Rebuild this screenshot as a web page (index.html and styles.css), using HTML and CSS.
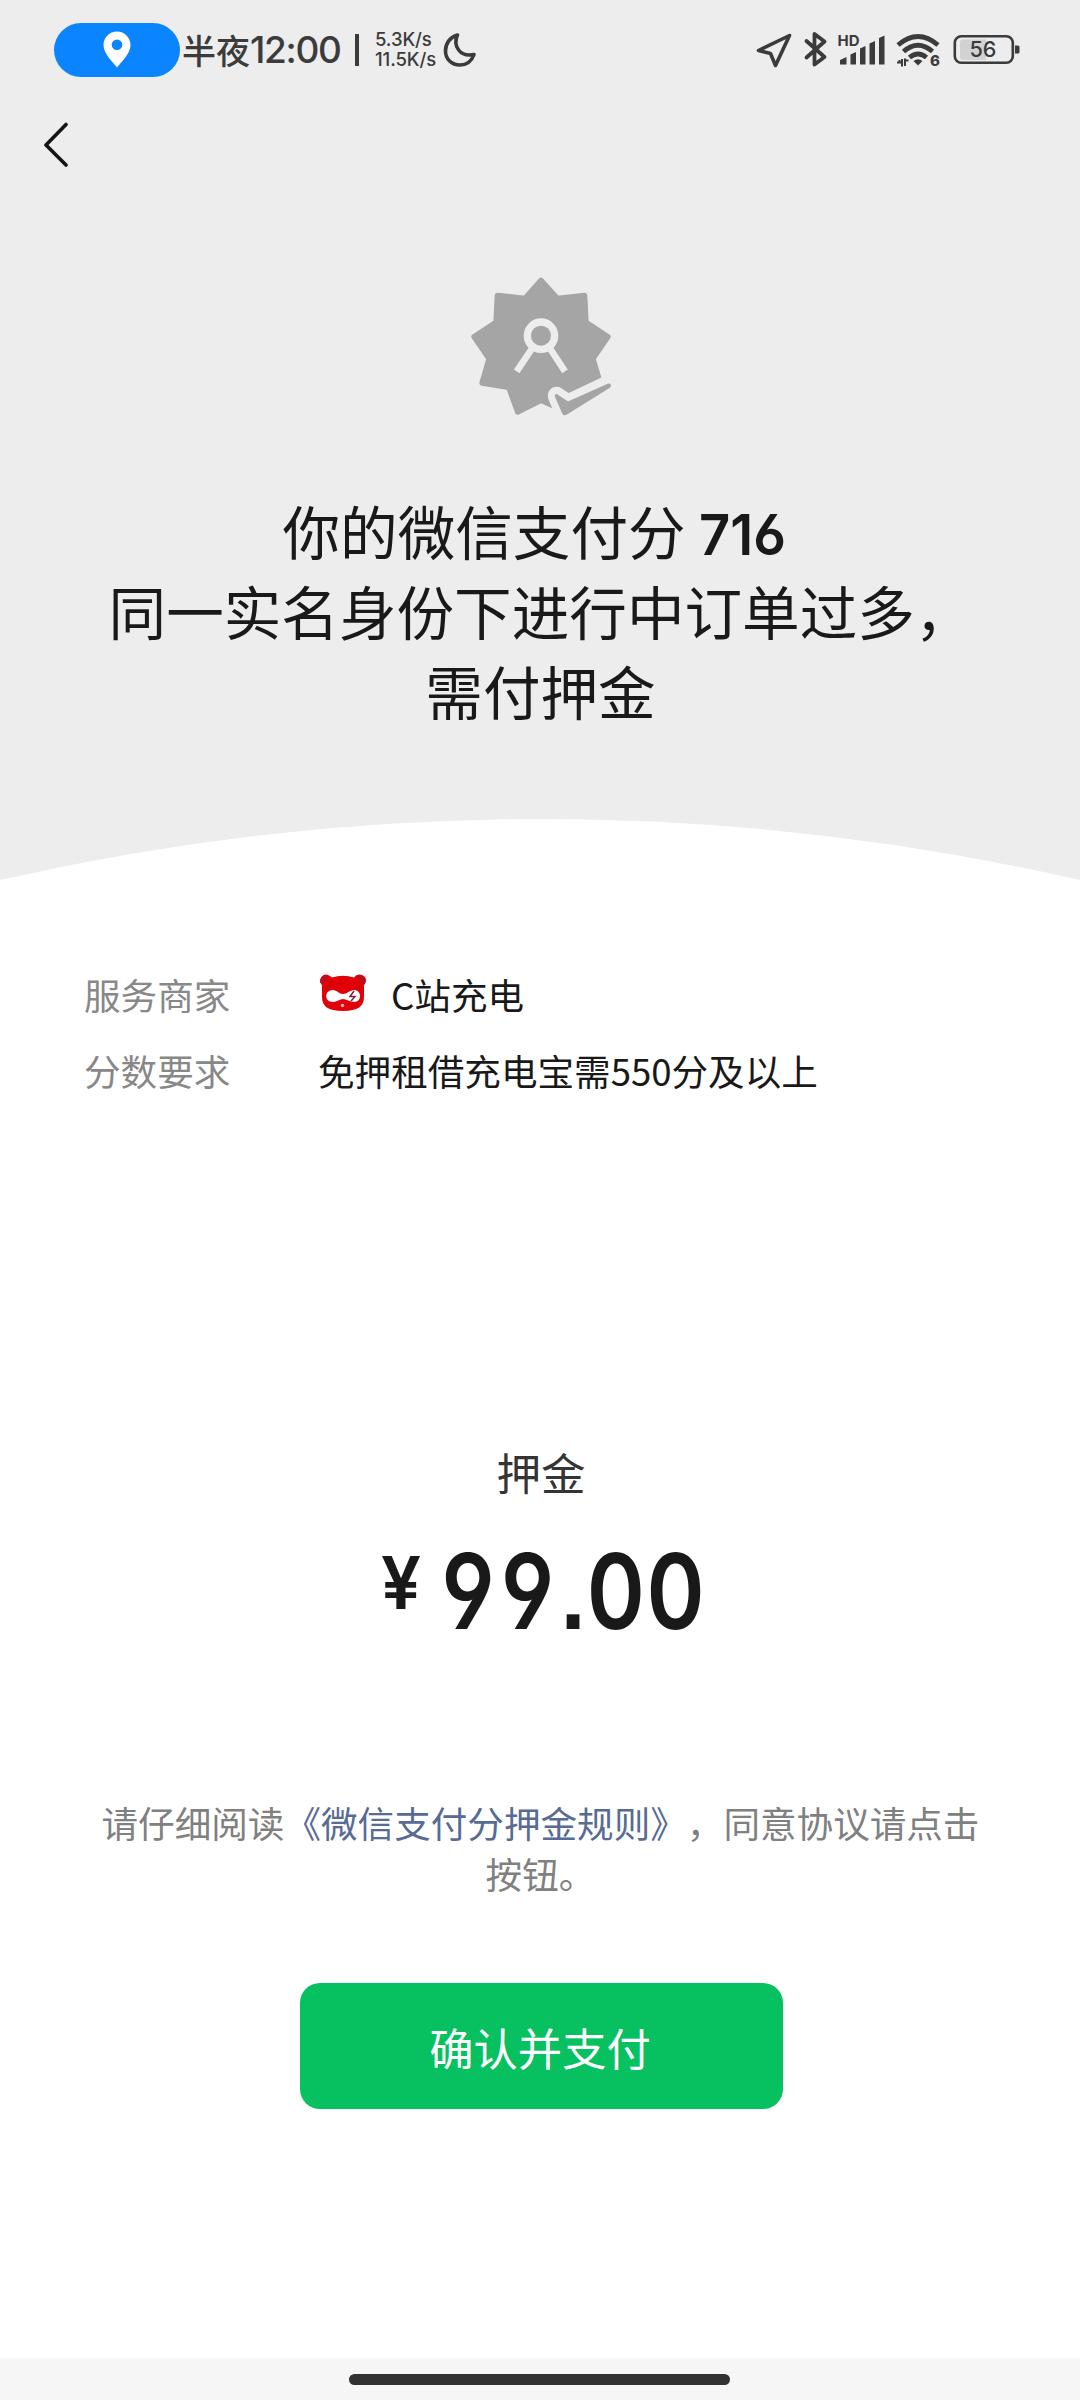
FILE: index.html
```html
<!DOCTYPE html>
<html lang="zh-CN">
<head>
<meta charset="utf-8">
<title>微信支付分</title>
<link rel="stylesheet" href="styles.css">
</head>
<body>
<main class="page">
  <section class="hero">
    <header class="status">
      <div class="pill">
        <svg width="28" height="37" viewBox="0 0 28 37"><path fill="#fff" fill-rule="evenodd" d="M14 .5C6.500.5.5 6.500.5 13.800c0 7.500 6 14 13.500 22.700 7.500-8.700 13.500-15.200 13.500-22.700C27.500 6.500 21.500.5 14 .5ZM14 8.500a5.300 5.300 0 1 1 0 10.600 5.300 5.300 0 0 1 0-10.600Z"/></svg>
      </div>
      <div class="clock">半夜<span class="digits">12:00</span></div>
      <div class="divider"></div>
      <div class="speed"><span>5.3K/s</span><span>11.5K/s</span></div>
      <svg class="moon" width="36" height="36" viewBox="0 0 36 36"><path fill="none" stroke="#3b3b3b" stroke-width="3.600" stroke-linejoin="round" d="M15.500 3C10.500 14 18 25.500 32 22.500C29.500 29.500 24.500 33 18 33C9.500 33 3.500 27 3.500 19C3.500 11.500 8 5 15.500 3Z"/></svg>
      <svg class="icons" width="270" height="40" viewBox="755 30 270 40" fill="none" stroke="#3b3b3b">
        <path stroke-width="3.600" stroke-linejoin="round" d="M789.500 35.500 758.500 50.500 770.500 53.500 775.500 65.500Z"/>
        <path stroke-width="3.800" stroke-linejoin="round" stroke-linecap="round" d="M806.500 41 824.500 57 814.500 64.500V34L824.500 41.500 806.500 57.500"/>
        <text class="hd" x="837.500" y="46" textLength="22" lengthAdjust="spacingAndGlyphs">HD</text>
        <path fill="#3b3b3b" stroke="none" d="M840 60l6.500-3v7.500H840ZM850.500 54.500l5.500-2.500v12.500h-5.500ZM860 48.500l5.500-2.500v18.500H860ZM869.500 43.500l5.500-2.500v23.500h-5.500ZM879 38l5.500-2.500v29H879Z"/>
        <path stroke-width="4.800" d="M898 45q20-17 40 0M903.500 51.500q14.500-12.500 29 0M909.500 57.500q8.500-7 17 0"/>
        <path fill="#3b3b3b" stroke="none" d="M913.500 61q4.500-3.500 9 0L918 65.500Z"/>
        <path stroke-width="2" d="M902 66.500v-7.500M897 62.500h4.500M905 58.500V66M905.500 60.500h3M899.500 60v3"/>
        <text class="six" x="930" y="66">6</text>
        <path fill="#d2d2d2" stroke="none" d="M963 39.500h23V60h-23q-3 0-3-3V42.500q0-3 3-3Z"/>
        <rect x="954.800" y="36.300" width="58" height="26.400" rx="6.500" stroke-width="2.600"/>
        <path fill="#3b3b3b" stroke="none" d="M1015 45.500h3q1.500 0 1.500 1.500v5q0 1.500-1.500 1.500h-3Z"/>
        <text class="level" x="969.500" y="57" textLength="27" lengthAdjust="spacingAndGlyphs">56</text>
      </svg>
    </header>
    <nav class="nav">
      <svg width="26" height="46" viewBox="0 0 26 46"><path fill="none" stroke="#151515" stroke-width="3.600" stroke-linecap="round" stroke-linejoin="round" d="M23 2.500 3 23 23 43"/></svg>
    </nav>
    <svg class="badge" width="148" height="144" viewBox="84 75 444 432">
      <path fill="#a5a5a5" stroke="#a5a5a5" stroke-width="16" stroke-linejoin="round" d="M303 91 352 145 434 136 438 217 504 260 459 326 478 390 400 440 336 466 303 451 233 486 206 412 126 399 147 326 102 260 168 217 172 136 255 145Z"/>
      <path fill="#ededed" d="M345 496 325 446C317 418 346 402 364 415L386 429 494 378 535 372V510H350Z"/>
      <path fill="#a5a5a5" stroke="#a5a5a5" stroke-width="10" stroke-linejoin="round" d="M349 437 384 460 505 406Q510 405 507 409L377 490Q373 492 371 488Z"/>
      <g fill="none" stroke="#ededed"><circle cx="303" cy="257" r="41" stroke-width="22"/><path stroke-width="20" d="M277 294 230 364M329 294 375 364"/></g>
    </svg>
    <h1 class="title">你的微信支付分 <svg class="score" width="100" height="64"><text x="0" y="54" textLength="87" lengthAdjust="spacingAndGlyphs">716</text></svg><br>同一实名身份下进行中订单过多，<br>需付押金</h1>
    <svg class="curve" width="1080" height="62" viewBox="0 0 1080 62"><path fill="#fff" d="M0 62A2421 2421 0 0 1 1080 62Z"/></svg>
  </section>

  <dl class="info">
    <dt>服务商家</dt>
    <dd class="merchant">
      <svg width="48" height="40" viewBox="0 0 48 40">
        <path fill="#df0008" d="M1 9C1 3 6 0 10 2.500Q12 3.500 13 4.500Q24 1 35 4.500Q38 0 43 2C48 4 48 9 45 12V24C45 33 39 38 24 38S3 33 3 24V12Z"/>
        <path fill="#b9101c" d="M1 9Q2 2 7 2L10 5 3 12ZM46 9Q46 2 40 2L38 5 45 12Z"/>
        <path fill="#fff" d="M14 17C18 17 20 21 24 21S31 17 35 17C43 17 43 29 35 29C31 29 27 26 24 26S18 29 14 29C5 29 5 17 14 17Z"/>
        <path fill="none" stroke="#802039" stroke-width="1.500" d="M35 18 31 23.500H36L32 28"/><circle cx="23.500" cy="32.500" r="1.800" fill="#ffaba8"/>
      </svg>
      <span>C站充电</span>
    </dd>
    <dt>分数要求</dt>
    <dd>免押租借充电宝需550分及以上</dd>
  </dl>

  <section class="deposit">
    <h2 class="label">押金</h2>
    <svg class="amount" width="350" height="140" viewBox="365 1520 350 140">
      <text class="yen" x="381" y="1607.500" textLength="40" lengthAdjust="spacingAndGlyphs">¥</text>
      <text class="value" transform="scale(.84 1)" x="525.500 596.500 665.500 698.500 769.500" y="1628">99.00</text>
    </svg>
  </section>

  <p class="terms">请仔细阅读<a class="link">《微信支付分押金规则》</a>，同意协议请点击<br>按钮。</p>
  <button class="pay" type="button">确认并支付</button>
  <footer class="home"><div class="handle"></div></footer>
</main>
</body>
</html>
```
FILE: styles.css
```css
* { box-sizing: border-box; margin: 0; padding: 0; }
body {
  background: #fff;
  color: #191919;
  font-family: "Noto Sans CJK SC", sans-serif;
}
.page {
  display: flex;
  flex-direction: column;
  align-items: center;
  width: 1080px;
  height: 2400px;
  overflow: hidden;
}
.hero {
  display: flex;
  flex-direction: column;
  align-items: center;
  width: 100%;
  height: 880px;
  background: #ededed;
}
.status {
  display: flex;
  align-items: center;
  width: 100%;
  height: 99px;
  padding-left: 54px;
  color: #3b3b3b;
}
.pill {
  display: flex;
  align-items: center;
  justify-content: center;
  width: 126px;
  height: 54px;
  border-radius: 27px;
  background: #0b84ff;
}
.clock {
  display: flex;
  align-items: center;
  width: 173px;
  height: 54px;
  padding-left: 2px;
  font-size: 34px;
  font-weight: 500;
  line-height: 50px;
  white-space: nowrap;
}
.digits { font-family: Inter, sans-serif; font-size: 37px; letter-spacing: -1.300px; }
.divider { width: 4px; height: 32px; margin-left: 2px; background: #3b3b3b; }
.speed {
  display: flex;
  flex-direction: column;
  width: 66px;
  margin-left: 16px;
  font-family: Inter, sans-serif;
  font-size: 18.500px;
  font-weight: 500;
  line-height: 19.500px;
  letter-spacing: -0.1px;
}
.moon { margin-left: 1px; }
.icons { margin-left: 277px; }
.hd, .six, .level { fill: #3b3b3b; stroke: none; font-family: Inter, sans-serif; }
.hd { font-size: 14.500px; font-weight: 700; }
.six { font-size: 15px; font-weight: 800; }
.level { font-size: 22px; font-weight: 500; }
.nav { width: 100%; height: 176px; padding: 23px 0 0 43px; }
.nav svg, .badge, .curve, .amount { display: block; }
.badge { margin-left: 4px; }
.title {
  height: 240px;
  margin-top: 71px;
  padding-left: 1px;
  font-size: 57.600px;
  font-weight: 400;
  line-height: 80px;
  text-align: center;
  white-space: nowrap;
}
.score, .amount {
  fill: #191919;
  font-family: Inter, sans-serif;
  font-feature-settings: "cv03", "cv04", "ss07";
}
.score { margin: -10px 0; font-size: 57px; font-weight: 600; line-height: 60px; overflow: visible; }
.curve { margin-top: auto; }
.info {
  display: grid;
  grid-template-columns: 234px 1fr;
  grid-auto-rows: 75.500px;
  align-items: center;
  width: 100%;
  margin-top: 77px;
  padding-left: 84px;
  font-size: 36.600px;
}
.info dt { color: #888; }
.merchant { display: flex; align-items: center; gap: 24px; padding-left: 1px; }
.merchant svg { margin-top: -3px; }
.deposit { display: flex; flex-direction: column; align-items: center; margin-top: 331px; }
.label { font-size: 44.500px; line-height: 66px; font-weight: 400; color: #353535; padding-left: 2px; }
.amount { margin-top: 16px; }
.yen { font-size: 73px; font-weight: 600; }
.value { font-size: 105px; font-weight: 600; }
.terms {
  margin-top: 136px;
  padding-left: 1px;
  font-size: 36.600px;
  line-height: 51px;
  color: #808080;
  text-align: center;
  text-spacing-trim: space-all;
  white-space: nowrap;
}
.link { color: #576b95; }
.pay {
  width: 483px;
  height: 126px;
  margin: 84px 0 0 2px;
  padding: 2px 2px 0 0;
  border: 0;
  border-radius: 20px;
  background: #07c160;
  color: #fff;
  font-family: inherit;
  font-size: 44.300px;
}
.home {
  display: flex;
  justify-content: center;
  width: 100%;
  height: 42px;
  margin-top: auto;
  padding: 16px 1px 0 0;
  background: #f6f6f6;
}
.handle { width: 381px; height: 11px; border-radius: 6px; background: #323232; }
```
